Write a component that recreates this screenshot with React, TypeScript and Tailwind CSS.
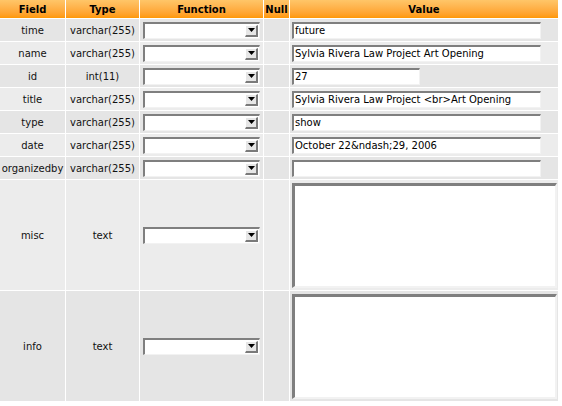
import React from "react";

const rows = [
  { field: "time", type: "varchar(255)", value: "future", kind: "input" },
  { field: "name", type: "varchar(255)", value: "Sylvia Rivera Law Project Art Opening", kind: "input" },
  { field: "id", type: "int(11)", value: "27", kind: "short" },
  { field: "title", type: "varchar(255)", value: "Sylvia Rivera Law Project <br>Art Opening", kind: "input" },
  { field: "type", type: "varchar(255)", value: "show", kind: "input" },
  { field: "date", type: "varchar(255)", value: "October 22&ndash;29, 2006", kind: "input" },
  { field: "organizedby", type: "varchar(255)", value: "", kind: "input" },
  { field: "misc", type: "text", value: "", kind: "area" },
  { field: "info", type: "text", value: "", kind: "area" },
];

function Select() {
  return (
    <div className="flex h-[17px] w-[117px] bg-white border-t-2 border-l-2 border-t-[#7f7f7f] border-l-[#7f7f7f] border-b border-r border-b-[#f2f2f2] border-r-[#f2f2f2]">
      <div className="flex-1" />
      <div className="my-px mr-px flex w-[13px] items-center justify-center bg-[#e6e6e6] border-t border-l border-t-white border-l-white border-b-2 border-r-2 border-b-[#7a7a7a] border-r-[#7a7a7a]">
        <svg width="7" height="4" viewBox="0 0 7 4">
          <path d="M0 0h7L3.5 4z" fill="#000" />
        </svg>
      </div>
    </div>
  );
}

function Input({ value, w }: { value: string; w: string }) {
  return (
    <div
      className={`${w} h-[17px] bg-white border-t-2 border-l-2 border-t-[#7f7f7f] border-l-[#7f7f7f] border-b border-r border-b-[#f2f2f2] border-r-[#f2f2f2] pl-px text-[10px] leading-[14px] text-black whitespace-nowrap overflow-hidden`}
    >
      {value}
    </div>
  );
}

export default function App() {
  const font = { fontFamily: '"DejaVu Sans", Verdana, sans-serif' };
  return (
    <div className="w-[562px] h-[406px] bg-white" style={font}>
      <div className="grid grid-cols-[65px_73px_123px_25px_268px] gap-px bg-white w-[558px]">
        {["Field", "Type", "Function", "Null", "Value"].map((h) => (
          <div
            key={h}
            className="h-[18px] bg-gradient-to-b from-[#ffc668] to-[#ff9800] flex items-center justify-center text-[10px] font-bold text-black"
          >
            {h}
          </div>
        ))}
        {rows.map((r, i) => {
          const bg = i % 2 === 0 ? "bg-[#e5e5e5]" : "bg-[#ececec]";
          const h = r.kind === "area" ? "h-[110px]" : "h-[22px]";
          return (
            <React.Fragment key={r.field}>
              <div className={`${bg} ${h} flex items-center justify-center text-[10px] text-[#111]`}>{r.field}</div>
              <div className={`${bg} ${h} flex items-center justify-center text-[10px] text-[#111]`}>{r.type}</div>
              <div className={`${bg} ${h} flex items-center pl-[3px]`}>
                <Select />
              </div>
              <div className={`${bg} ${h}`} />
              <div className={`${bg} ${h} flex ${r.kind === "area" ? "items-start pt-[3px]" : "items-center"} pl-[2px]`}>
                {r.kind === "area" ? (
                  <div className="w-[265px] h-[105px] bg-white border-t-[3px] border-l-[3px] border-t-[#7f7f7f] border-l-[#7f7f7f] border-b-2 border-r-2 border-b-[#f2f2f2] border-r-[#f2f2f2]" />
                ) : (
                  <Input value={r.value} w={r.kind === "short" ? "w-[128px]" : "w-[249px]"} />
                )}
              </div>
            </React.Fragment>
          );
        })}
      </div>
    </div>
  );
}
